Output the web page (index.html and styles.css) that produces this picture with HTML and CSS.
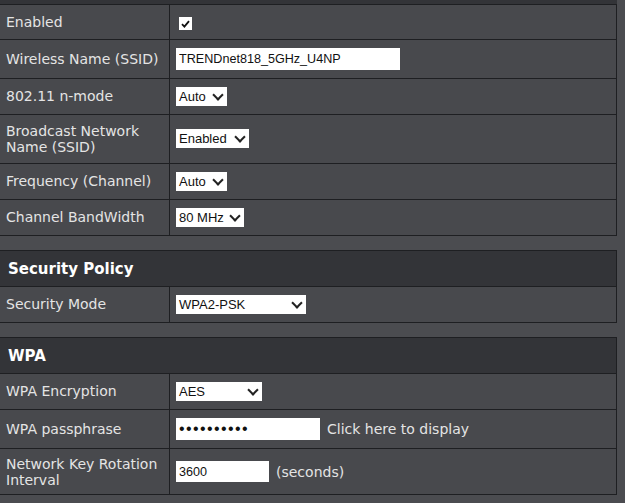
FILE: index.html
```html
<!DOCTYPE html>
<html lang="en">
<head>
    <meta charset="UTF-8" />
    <meta name="viewport" content="width=device-width, initial-scale=1.0" />
    <title>Wireless 5GHz</title>
    <link rel="stylesheet" href="styles.css">
</head>
<body>
    <div class="top-strip"></div>

    <table class="form-table">
        <tr>
            <td class="label">Enabled</td>
            <td class="field"><span class="check"><svg width="9" height="8" viewBox="0 0 9 8"><path d="M1 4.2 L3.4 6.6 L8 1.2" fill="none" stroke="#111" stroke-width="1.8"/></svg></span></td>
        </tr>
        <tr>
            <td class="label">Wireless Name (SSID)</td>
            <td class="field"><input class="text-in ssid" type="text" value="TRENDnet818_5GHz_U4NP"></td>
        </tr>
        <tr>
            <td class="label">802.11 n-mode</td>
            <td class="field"><span class="sel w-auto">Auto<i class="chev"></i></span></td>
        </tr>
        <tr>
            <td class="label">Broadcast Network<br>Name (SSID)</td>
            <td class="field"><span class="sel w-enabled">Enabled<i class="chev"></i></span></td>
        </tr>
        <tr>
            <td class="label">Frequency (Channel)</td>
            <td class="field"><span class="sel w-auto">Auto<i class="chev"></i></span></td>
        </tr>
        <tr>
            <td class="label">Channel BandWidth</td>
            <td class="field"><span class="sel w-mhz">80 MHz<i class="chev"></i></span></td>
        </tr>
    </table>

    <table class="form-table">
        <tr><th colspan="2">Security Policy</th></tr>
        <tr>
            <td class="label">Security Mode</td>
            <td class="field"><span class="sel w-psk">WPA2-PSK<i class="chev"></i></span></td>
        </tr>
    </table>

    <table class="form-table">
        <tr><th colspan="2">WPA</th></tr>
        <tr>
            <td class="label">WPA Encryption</td>
            <td class="field"><span class="sel w-aes">AES<i class="chev"></i></span></td>
        </tr>
        <tr>
            <td class="label">WPA passphrase</td>
            <td class="field"><input class="text-in pass" type="password" value="1234567890"><a class="show-link">Click here to display</a></td>
        </tr>
        <tr class="compact">
            <td class="label">Network Key Rotation<br>Interval</td>
            <td class="field"><input class="text-in interval" type="text" value="3600"><span class="unit">(seconds)</span></td>
        </tr>
    </table>
</body>
</html>
```

FILE: styles.css
```css
body {
    margin: 0;
    background: #4b4c50;
    font-family: 'DejaVu Sans', Verdana, sans-serif;
    font-size: 14px;
    color: #e4e4e4;
    width: 625px;
    height: 503px;
    overflow: hidden;
}
.top-strip {
    height: 4px;
    width: 617px;
    background: #333438;
}
.form-table {
    width: 617px;
    border-collapse: collapse;
    background: #48494d;
    border-right: 1px solid #1e1f22;
}
.form-table + .form-table {
    margin-top: 14px;
}
.form-table td {
    border: 1px solid #1e1f22;
    border-left: none;
    padding: 8px 6px;
    line-height: 16px;
    vertical-align: middle;
}
.form-table td.label {
    width: 157px;
}
.form-table td.field {
    padding-left: 6px;
}
.form-table th {
    background: #333438;
    color: #fff;
    text-align: left;
    font-size: 15px;
    font-weight: bold;
    padding: 10px 8px 9px;
    line-height: 16px;
    border-top: 1px solid #1e1f22;
}
.form-table tr.compact td {
    padding-top: 7px;
    padding-bottom: 6px;
}
.check {
    display: inline-block;
    width: 13px;
    height: 13px;
    background: #fff;
    margin: 3px 0 1px 3px;
    vertical-align: middle;
    text-align: center;
    line-height: 13px;
}
.check svg {
    display: block;
    margin: 3px auto 0;
}
.text-in {
    font-family: 'Liberation Sans', Arial, sans-serif;
    font-size: 12.6px;
    color: #111;
    background: #fff;
    border: none;
    height: 22px;
    padding: 0 3px;
    margin: 0;
    box-sizing: border-box;
    vertical-align: middle;
    outline: none;
}
.ssid { width: 224px; }
.pass { width: 144px; font-size: 16px; letter-spacing: 1.4px; }
.interval { width: 93px; height: 21px; }
.show-link, .unit {
    margin-left: 7px;
    vertical-align: middle;
}
.sel {
    position: relative;
    display: inline-block;
    height: 19px;
    line-height: 19px;
    background: #fff;
    color: #111;
    font-family: 'Liberation Sans', Arial, sans-serif;
    font-size: 13px;
    padding-left: 3px;
    box-sizing: border-box;
    vertical-align: middle;
}
.chev {
    position: absolute;
    right: 5px;
    top: 4px;
    width: 6px;
    height: 6px;
    border-right: 2px solid #222;
    border-bottom: 2px solid #222;
    transform: rotate(45deg);
}
.w-auto { width: 51px; }
.w-enabled { width: 73px; }
.w-mhz { width: 68px; }
.w-psk { width: 130px; }
.w-aes { width: 86px; }
```
